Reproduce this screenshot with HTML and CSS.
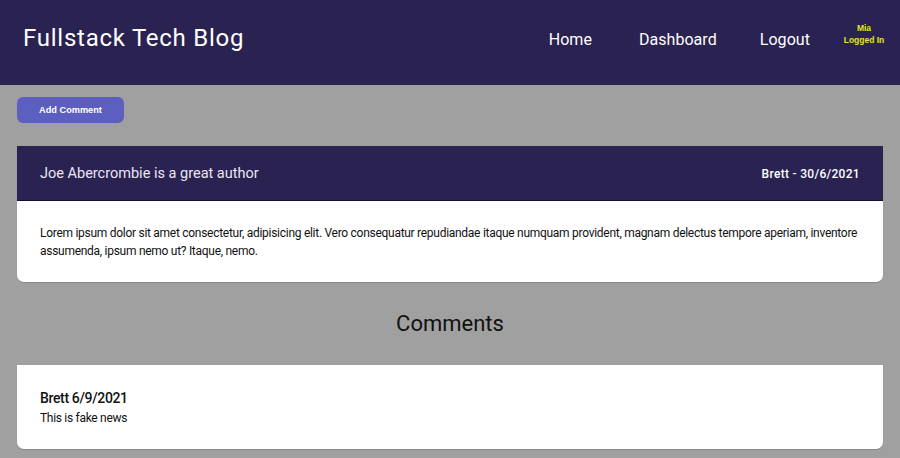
FILE: index.html
```html
<!DOCTYPE html>
<html>
<head>
<meta charset="utf-8">
<link rel="stylesheet" href="styles.css">
</head>
<body>
<header class="topbar">
  <h1 class="brand">Fullstack Tech Blog</h1>
  <nav class="nav">
    <a class="nav-link" href="#">Home</a>
    <a class="nav-link" href="#">Dashboard</a>
    <a class="nav-link" href="#">Logout</a>
    <div class="user">Mia<br>Logged In</div>
  </nav>
</header>
<main class="main">
  <button class="add-btn">Add Comment</button>
  <section class="post">
    <div class="post-head">
      <h2 class="post-title">Joe Abercrombie is a great author</h2>
      <span class="post-meta">Brett - 30/6/2021</span>
    </div>
    <div class="post-body">
      <p>Lorem ipsum dolor sit amet consectetur, adipisicing elit. Vero consequatur repudiandae itaque numquam provident, magnam delectus tempore aperiam, inventore assumenda, ipsum nemo ut? Itaque, nemo.</p>
    </div>
  </section>
  <h2 class="comments-title">Comments</h2>
  <section class="comment">
    <h3 class="comment-title">Brett 6/9/2021</h3>
    <p class="comment-text">This is fake news</p>
  </section>
</main>
</body>
</html>
```
FILE: styles.css
```css
* { box-sizing: border-box; }
body {
  margin: 0;
  background: #a0a0a0;
  font-family: Roboto, "Liberation Sans", sans-serif;
  color: #111;
}
.topbar {
  height: 85px;
  background: #2a2250;
  display: flex;
  align-items: center;
  justify-content: space-between;
  padding: 0 0 0 23px;
}
.brand {
  margin: 0;
  color: #fff;
  font-weight: 400;
  font-size: 24px;
  letter-spacing: 0.75px;
  padding-bottom: 9px;
}
.nav {
  display: flex;
  align-items: center;
  padding-bottom: 7px;
}
.nav-link {
  color: #fff;
  text-decoration: none;
  font-size: 16px;
  letter-spacing: 0.05px;
  margin-right: 43px;
}
.nav-link:first-child { margin-right: 47px; }
.nav-link:nth-child(3) { margin-right: 18px; }
.user {
  color: #e3e620;
  font-family: "Liberation Sans", Arial, sans-serif;
  font-weight: 700;
  font-size: 8.5px;
  line-height: 12px;
  text-align: center;
  width: 72px;
  margin-top: -10px;
}
.main {
  padding: 12px 17px 10px;
}
.add-btn {
  display: block;
  width: 107px;
  height: 26px;
  border: none;
  border-radius: 6px;
  background: #5c5fbf;
  color: #fff;
  font-family: "Liberation Sans", Arial, sans-serif;
  font-weight: 700;
  font-size: 9.2px;
  padding: 0;
  margin-bottom: 23px;
}
.post {
  background: #fff;
  border-radius: 0 0 7px 7px;
  overflow: hidden;
  box-shadow: 0 1px 1px rgba(0,0,0,0.15);
}
.post-head {
  background: #2a2250;
  height: 55px;
  display: flex;
  align-items: center;
  justify-content: space-between;
  padding: 0 23px;
  border-bottom: 1px solid #140f30;
}
.post-title {
  margin: 0;
  color: #ece6f4;
  font-weight: 400;
  font-size: 14.5px;
  letter-spacing: 0;
}
.post-meta {
  color: #fff;
  font-weight: 500;
  font-size: 12px;
  letter-spacing: 0.3px;
  padding-top: 2px;
}
.post-body {
  padding: 23px 18px 22px 23px;
}
.post-body p {
  margin: 0;
  font-size: 12px;
  line-height: 18px;
  letter-spacing: -0.28px;
  color: #111;
}
.comments-title {
  margin: 28px 0 27px;
  text-align: center;
  font-weight: 400;
  font-size: 22px;
  color: #111;
  line-height: 28px;
}
.comment {
  background: #fff;
  border-radius: 0 0 7px 7px;
  padding: 25px 23px 23px;
  box-shadow: 0 1px 1px rgba(0,0,0,0.15);
}
.comment-title {
  margin: 0 0 4px;
  font-size: 14px;
  font-weight: 500;
  line-height: 17px;
  letter-spacing: -0.35px;
}
.comment-text {
  margin: 0;
  font-size: 12px;
  line-height: 15px;
  letter-spacing: -0.3px;
}
```
